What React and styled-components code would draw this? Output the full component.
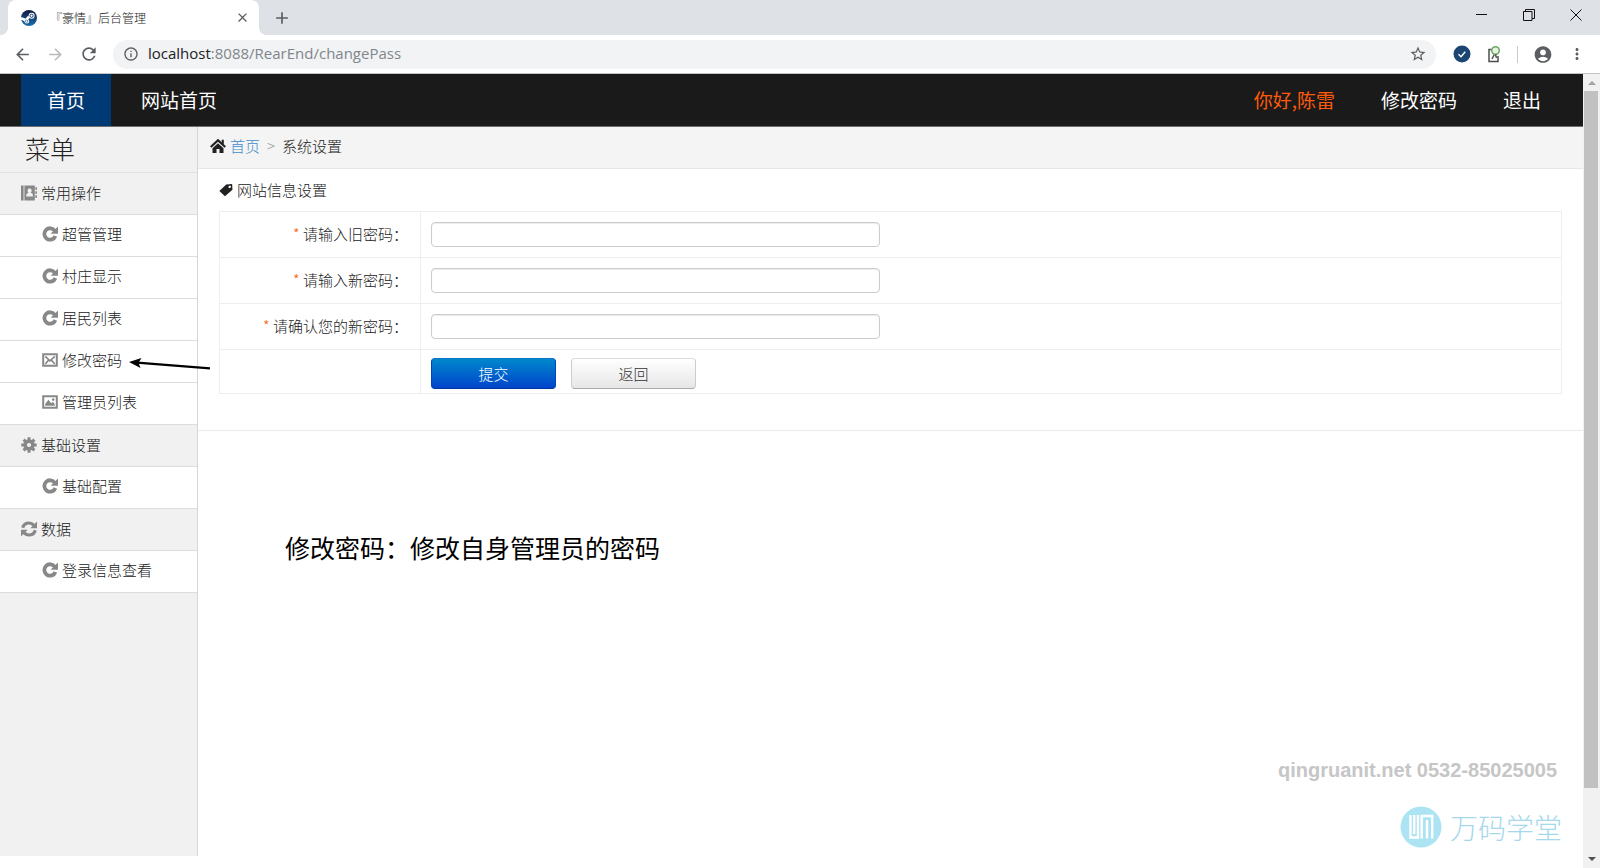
import React from 'react'
import styled, { createGlobalStyle } from "styled-components";
import {
  MdArrowBack,
  MdArrowForward,
  MdRefresh,
  MdInfoOutline,
  MdStarBorder,
  MdAccountCircle,
  MdMoreVert,
  MdAdd,
  MdClose,
} from 'react-icons/md';

const menu = [
  {
    title: '常用操作',
    icon: 'book',
    items: [
      { text: '超管管理', icon: 'repeat' },
      { text: '村庄显示', icon: 'repeat' },
      { text: '居民列表', icon: 'repeat' },
      { text: '修改密码', icon: 'mail', marked: true },
      { text: '管理员列表', icon: 'image' },
    ],
  },
  { title: '基础设置', icon: 'cog', items: [{ text: '基础配置', icon: 'repeat' }] },
  { title: '数据', icon: 'sync', items: [{ text: '登录信息查看', icon: 'repeat' }] },
];

const fields = [
  { id: 'oldPass', label: '请输入旧密码：' },
  { id: 'newPass', label: '请输入新密码：' },
  { id: 'confirmPass', label: '请确认您的新密码：' },
];

const icons = {
  repeat: (
    <>
      <path d="M12.8 4.800A5.700 5.700 0 1 0 13.400 10" fill="none" stroke="currentColor" strokeWidth="3.800" />
      <path d="M16 .4v7.400H8.600z" />
    </>
  ),
  mail: (
    <>
      <path d="M1.200 2.200h13.600v11.600H1.200z" fill="none" stroke="currentColor" strokeWidth="2" />
      <path d="M3.200 4.400 8 8.800l4.800-4.400M3.200 12l3.200-3.600M12.800 12l-3.200-3.600" fill="none" stroke="currentColor" strokeWidth="1.600" />
    </>
  ),
  image: (
    <>
      <path d="M1.200 2.200h13.600v11.600H1.200z" fill="none" stroke="currentColor" strokeWidth="2" />
      <path d="M3.200 11.800V10l3.200-4.200 2.800 3.400 1.600-1.400 2 2.400v1.600z" />
      <circle cx="11.200" cy="5.600" r="1.300" />
    </>
  ),
  book: (
    <>
      <path fillRule="evenodd" d="M0 .5h2.600v15H0zM3.400.5h10.400v15H3.400zM8.600 3.600a2 2 0 0 0-1.300 3.600v.9c-1.300.3-2 1.100-2 2.100v1.300h6.600v-1.300c0-1-.7-1.800-2-2.100v-.9a2 2 0 0 0-1.300-3.600z" />
      <path d="M14.300 2.200h1.700v2.600h-1.700zM14.300 6.200h1.700v2.600h-1.700zM14.300 10.200h1.700v2.600h-1.700z" />
    </>
  ),
  cog: (
    <>
      <circle cx="8" cy="8" r="3.900" fill="none" stroke="currentColor" strokeWidth="3.600" />
      <path d="M8 .3v3M8 12.700v3M.3 8h3M12.700 8h3M2.600 2.600l2 2M11.400 11.400l2 2M2.600 13.400l2-2M11.400 4.600l2-2" fill="none" stroke="currentColor" strokeWidth="3" />
    </>
  ),
  sync: (
    <>
      <path d="M1.700 6.800C2.600 3.600 5 2 8 2c2 0 3.600.8 4.800 2.100M14.300 9.200C13.400 12.400 11 14 8 14c-2 0-3.600-.8-4.800-2.100" fill="none" stroke="currentColor" strokeWidth="3.200" />
      <path d="M16 .5v6.700H9.300zM0 15.500V8.800h6.700z" />
    </>
  ),
  home: (
    <>
      <path d="M8 .8 0 8.300l1.500 1.500L8 3.800l6.500 6L16 8.300l-2.200-2.100V1.800h-2.100v2.400z" />
      <path d="M8 5.200 2.500 10.300V15h4v-4h3v4h4v-4.700z" />
    </>
  ),
  tag: (
    <path fillRule="evenodd" d="M8.200 1.800 15 1l.4 6.600L6.800 15.200.4 9zM12.200 3a1.400 1.400 0 1 0 .1 2.800 1.400 1.400 0 0 0-.1-2.800z" />
  ),
};

const Icon = ({ name, size = 16 }) => (
  <Svg viewBox="0 0 16 16" width={size} height={size} aria-hidden="true">
    {icons[name]}
  </Svg>
);

const Favicon = () => (
  <Svg viewBox="0 0 16 16" width="16" height="16" aria-hidden="true">
    <defs>
      <linearGradient id="steam" x1="0" y1="0" x2="0" y2="1">
        <stop offset="0" stopColor="#10183f" />
        <stop offset="1" stopColor="#1b6fae" />
      </linearGradient>
    </defs>
    <circle cx="8" cy="8" r="8" fill="url(#steam)" />
    <path d="M0 8.300l4.800 2 3.200-3.600" fill="none" stroke="#fff" strokeWidth="2.600" />
    <circle cx="5.800" cy="11.200" r="2.300" fill="#fff" />
    <circle cx="10.600" cy="5.800" r="3" fill="#fff" />
    <circle cx="10.600" cy="5.800" r="1.600" fill="none" stroke="#22406f" />
    <circle cx="5.600" cy="11.200" r="1.200" fill="none" stroke="#22639c" strokeWidth=".7" />
  </Svg>
);

const BrowserBar = () => (
  <header>
    <DivTabs>
      <DivTab>
        <Favicon />
        <SpanTabTitle>『豪情』后台管理</SpanTabTitle>
        <ButtonIcon aria-label="关闭标签页"><MdClose size={15} /></ButtonIcon>
      </DivTab>
      <ButtonIcon $w={46} aria-label="新标签页"><MdAdd size={20} /></ButtonIcon>
      <DivWindow>
        <ButtonIcon $w={47} $dark aria-label="最小化">
          <svg width="12" height="12"><path d="M0 5.500h11" stroke="currentColor" /></svg>
        </ButtonIcon>
        <ButtonIcon $w={47} $dark aria-label="还原">
          <svg width="12" height="12" fill="none" stroke="currentColor">
            <path d="M.5 2.500h8.500v9H.5zM2.500 2.500v-2h9v9H9" />
          </svg>
        </ButtonIcon>
        <ButtonIcon $w={47} $dark aria-label="关闭">
          <svg width="12" height="12"><path d="M.5.5l11 11M11.500.5l-11 11" stroke="currentColor" /></svg>
        </ButtonIcon>
      </DivWindow>
    </DivTabs>
    <DivTools>
      <ButtonIcon $w={33} aria-label="后退"><MdArrowBack size={19} /></ButtonIcon>
      <ButtonIcon $w={33} $off aria-label="前进"><MdArrowForward size={19} /></ButtonIcon>
      <ButtonIcon $w={33} aria-label="刷新"><MdRefresh size={20} /></ButtonIcon>
      <DivAddress>
        <MdInfoOutline size={16} />
        <PUrl><b>localhost</b>:8088/RearEnd/changePass</PUrl>
        <ButtonIcon aria-label="收藏"><MdStarBorder size={18} /></ButtonIcon>
      </DivAddress>
      <DivExtensions>
        <svg width="18" height="18" viewBox="0 0 18 18">
          <circle cx="9" cy="9" r="8.500" fill="#1b4672" />
          <path d="M5.500 9.300l2.500 2.400 4.300-5" fill="none" stroke="#fff" strokeWidth="1.400" />
        </svg>
        <svg width="16" height="18" viewBox="0 0 16 18" fill="none" strokeWidth="1.500">
          <path d="M5.500 4.500H3v12h9V11M6 14l2.500-5" stroke="#4d4d4d" />
          <circle cx="9.500" cy="5.500" r="3.800" stroke="#6ba562" fill="#e6f3e3" />
          <path d="M9.500 9.500l1 3.500" stroke="#4d4d4d" />
        </svg>
        <DivSeparator />
        <ButtonIcon $w={20} aria-label="用户"><MdAccountCircle size={21} /></ButtonIcon>
        <ButtonIcon $w={18} aria-label="更多"><MdMoreVert size={20} /></ButtonIcon>
      </DivExtensions>
    </DivTools>
  </header>
);

const SideMenu = () => (
  <NavSide>
    <H2Menu>菜单</H2Menu>
    {menu.map(group => (
      <React.Fragment key={group.title}>
        <H3Group><Icon name={group.icon} /><span>{group.title}</span></H3Group>
        <UlItems>
          {group.items.map(item => (
            <LiItem key={item.text}>
              <ALink href="#"><Icon name={item.icon} /><span>{item.text}</span></ALink>
              {item.marked && (
                <SvgArrow viewBox="0 0 84 16" width="84" height="16" aria-hidden="true">
                  <path d="M8 6.600 81 12.300" stroke="#000" strokeWidth="2.200" />
                  <path d="M0 6 12.500 2 9.500 6.700 11.500 12z" />
                </SvgArrow>
              )}
            </LiItem>
          ))}
        </UlItems>
      </React.Fragment>
    ))}
  </NavSide>
);

const PassForm = () => (
  <form onSubmit={(e) => e.preventDefault()}>
    <TableForm>
      <tbody>
        {fields.map(f => (
          <tr key={f.id}>
            <Th scope="row">
              <label htmlFor={f.id}><Star>*</Star> {f.label}</label>
            </Th>
            <Td><InputPass type="password" id={f.id} /></Td>
          </tr>
        ))}
        <tr>
          <Th as="td" />
          <Td $short>
            <DivButtons>
              <ButtonForm $primary type="submit">提交</ButtonForm>
              <ButtonForm type="button">返回</ButtonForm>
            </DivButtons>
          </Td>
        </tr>
      </tbody>
    </TableForm>
  </form>
);

const Scrollbar = () => (
  <DivScroll>
    <DivScrollEnd><svg width="8" height="5"><path d="M0 5 4 1l4 4z" fill="#a3a3a3" /></svg></DivScrollEnd>
    <DivTrack><DivThumb /></DivTrack>
    <DivScrollEnd><svg width="8" height="5"><path d="M0 0l4 4 4-4z" fill="#505050" /></svg></DivScrollEnd>
  </DivScroll>
);

const App = () => {
  return (
    <DivScreen>
      <GlobalStyle />
      <BrowserBar />
      <DivViewport>
        <DivPage>
          <NavTop>
            <ANav href="#" $active>首页</ANav>
            <ANav href="#">网站首页</ANav>
            <DivUser>
              <SpanHello>你好,陈雷</SpanHello>
              <AUser href="#">修改密码</AUser>
              <AUser href="#">退出</AUser>
            </DivUser>
          </NavTop>
          <DivBody>
            <SideMenu />
            <Main>
              <DivCrumbs>
                <Icon name="home" />
                <ACrumb href="#">首页</ACrumb>
                <SpanSep>&gt;</SpanSep>
                <span>系统设置</span>
              </DivCrumbs>
              <Section>
                <H1Title><Icon name="tag" size={14} />网站信息设置</H1Title>
                <PassForm />
              </Section>
              <PNote>修改密码：修改自身管理员的密码</PNote>
              <Footer>
                <PContact>qingruanit.net 0532-85025005</PContact>
                <DivBrand>
                  <svg width="42" height="42" viewBox="0 0 42 42">
                    <circle cx="21" cy="21" r="20.500" fill="#ace4f3" />
                    <path d="M10.500 9v22.500h7.500V9M14.200 9v19M21.700 32.500V10h10.500v22.500M27 14v18.500M21.700 32.500" fill="none" stroke="#fff" strokeWidth="2.400" />
                  </svg>
                  <span>万码学堂</span>
                </DivBrand>
              </Footer>
            </Main>
          </DivBody>
        </DivPage>
        <Scrollbar />
      </DivViewport>
    </DivScreen>
  );
};

export default App;

const GlobalStyle = createGlobalStyle`
  * {
    box-sizing: border-box;
  }
  body {
    margin: 0;
    background: #fff;
    color: #222;
    font-family: "Noto Sans CJK SC", sans-serif;
    font-size: 15px;
    font-weight: 300;
    line-height: 20px;
  }
  a {
    color: inherit;
    text-decoration: none;
  }
  h1, h2, h3, p, ul {
    margin: 0;
    padding: 0;
    font-weight: 300;
  }
  svg {
    display: block;
  }
`;

const Svg = styled.svg`
  flex: none;
  fill: currentColor;
`;

const DivScreen = styled.div`
  min-height: 100vh;
  display: flex;
  flex-direction: column;
`;

/* browser */
const ButtonIcon = styled.button`
  width: ${p => p.$w || 20}px;
  height: 30px;
  flex: none;
  padding: 0;
  border: none;
  background: none;
  display: flex;
  align-items: center;
  justify-content: center;
  color: ${p => (p.$dark ? '#111' : p.$off ? '#bababa' : '#5a5d61')};
`;

const DivTabs = styled.div`
  height: 35px;
  padding-left: 8px;
  background: #dee1e6;
  display: flex;
  align-items: center;
`;

const DivTab = styled.div`
  position: relative;
  width: 251px;
  height: 35px;
  padding: 0 7px 0 13px;
  display: flex;
  align-items: center;
  gap: 13px;
  background: #fff;
  border-radius: 8px 8px 0 0;

  &::before,
  &::after {
    content: '';
    position: absolute;
    bottom: 0;
    width: 8px;
    height: 8px;
  }
  &::before {
    left: -8px;
    background: radial-gradient(circle at 0 0, transparent 8px, #fff 8px);
  }
  &::after {
    right: -8px;
    background: radial-gradient(circle at 100% 0, transparent 8px, #fff 8px);
  }
`;

const SpanTabTitle = styled.span`
  flex: 1;
  font-size: 12px;
`;

const DivWindow = styled.div`
  margin-left: auto;
  padding-right: 1px;
  height: 35px;
  display: flex;
`;

const DivTools = styled.div`
  height: 39px;
  padding: 0 14px 0 6px;
  display: flex;
  align-items: center;
  background: #fff;
  border-bottom: 1px solid #c4c4c4;
`;

const DivAddress = styled.div`
  flex: 1;
  height: 29px;
  margin-left: 8px;
  padding: 0 8px 0 10px;
  display: flex;
  align-items: center;
  gap: 9px;
  border-radius: 15px;
  background: #f1f3f4;
  color: #5a5d61;
`;

const PUrl = styled.p`
  flex: 1;
  padding-bottom: 2px;
  font: 400 15px/20px "Open Sans", sans-serif;
  color: #80868b;

  b {
    font-weight: 400;
    color: #202124;
  }
`;

const DivExtensions = styled.div`
  margin-left: 17px;
  display: flex;
  align-items: center;
  gap: 15px;
`;

const DivSeparator = styled.div`
  width: 1px;
  height: 17px;
  background: #c8cacd;
`;

/* page */
const DivViewport = styled.div`
  flex: 1;
  display: flex;
`;

const DivPage = styled.div`
  flex: 1;
  display: flex;
  flex-direction: column;
  padding-bottom: 12px;
`;

const NavTop = styled.nav`
  height: 53px;
  padding: 0 42px 0 21px;
  display: flex;
  gap: 4px;
  background: #1a1a1a;
  border-bottom: 1px solid #6e6e6e;
  color: #fff;
  font-size: 19px;
  font-weight: 400;
`;

const ANav = styled.a`
  padding: 0 26px;
  display: flex;
  align-items: center;
  background: ${p => (p.$active ? '#003a75' : 'none')};
`;

const DivUser = styled.div`
  margin-left: auto;
  display: flex;
  align-items: center;
  gap: 46px;
`;

const SpanHello = styled.span`
  color: #ff5a0a;
`;

const AUser = styled.a`
  color: #fff;
`;

const DivBody = styled.div`
  flex: 1;
  display: flex;
`;

const NavSide = styled.nav`
  width: 198px;
  flex: none;
  background: #f1f1f1;
  border-right: 1px solid #d6d6d6;
`;

const H2Menu = styled.h2`
  height: 46px;
  padding-left: 25px;
  border-bottom: 1px solid #e2e2e2;
  font-size: 25px;
  line-height: 42px;
`;

const H3Group = styled.h3`
  height: 42px;
  padding: 0 0 2px 21px;
  display: flex;
  align-items: center;
  gap: 4px;
  border-bottom: 1px solid #dcdcdc;
  font-size: 15px;

  svg {
    color: #888;
  }
`;

const UlItems = styled.ul`
  list-style: none;
`;

const LiItem = styled.li`
  position: relative;
  background: #fff;
  border-bottom: 1px solid #dcdcdc;
`;

const ALink = styled.a`
  height: 41px;
  padding: 0 0 3px 42px;
  display: flex;
  align-items: center;
  gap: 4px;

  svg {
    color: #888;
  }
`;

/* pointer over the sidebar edge */
const SvgArrow = styled.svg`
  position: absolute;
  left: 129px;
  top: 15px;
  z-index: 1;
`;

const Main = styled.main`
  flex: 1;
  display: flex;
  flex-direction: column;
`;

const DivCrumbs = styled.div`
  height: 42px;
  padding: 0 0 3px 12px;
  display: flex;
  align-items: center;
  gap: 4px;
  background: #f4f4f4;
  border-bottom: 1px solid #e6e6e6;
`;

const ACrumb = styled.a`
  color: #428bca;
`;

const SpanSep = styled.span`
  padding: 0 3px;
  color: #999;
`;

const Section = styled.section`
  padding: 11px 21px 36px;
  border-bottom: 1px solid #eaeaea;
`;

const H1Title = styled.h1`
  display: flex;
  align-items: center;
  gap: 4px;
  margin-bottom: 11px;
  font-size: 15px;
  line-height: 20px;
`;

const TableForm = styled.table`
  width: 100%;
  border-collapse: collapse;
  table-layout: fixed;
`;

const Th = styled.th`
  width: 201px;
  padding: 0 12px 2px 0;
  border: 1px solid #eee;
  font-weight: 300;
  text-align: right;
`;

const Td = styled.td`
  height: ${p => (p.$short ? 44 : 46)}px;
  padding: ${p => (p.$short ? '4px 10px 0' : '0 10px')};
  border: 1px solid #eee;
`;

const Star = styled.span`
  color: #ff5a0a;
`;

const InputPass = styled.input`
  display: block;
  width: 449px;
  max-width: 100%;
  height: 25px;
  padding: 0 6px;
  border: 1px solid #ccc;
  border-radius: 4px;
  background: #fff;
  box-shadow: inset 0 1px 1px rgba(0,0,0,.08);
`;

const DivButtons = styled.div`
  display: flex;
  gap: 15px;
`;

const ButtonForm = styled.button`
  width: 125px;
  height: 31px;
  padding: 0;
  border: 1px solid;
  border-color: ${p => (p.$primary ? '#0a74c4 #0044b8 #003a9c' : '#ddd #ccc #aaa')};
  border-radius: 4px;
  background: ${p => (p.$primary ? 'linear-gradient(#0088cc, #0044cc)' : 'linear-gradient(#fff, #e6e6e6)')};
  color: ${p => (p.$primary ? '#fff' : '#333')};
  font: inherit;
`;

const PNote = styled.p`
  padding: 98px 20px 40px 87px;
  color: #000;
  font-size: 25px;
  font-weight: 400;
  line-height: 36px;
`;

const Footer = styled.footer`
  margin-top: auto;
  padding: 0 21px 8px 0;
  display: flex;
  flex-direction: column;
  align-items: flex-end;
  gap: 24px;
`;

const PContact = styled.p`
  padding-right: 5px;
  color: #c6c6c6;
  font: 700 20px/24px "Liberation Sans", sans-serif;
`;

const DivBrand = styled.div`
  display: flex;
  align-items: center;
  gap: 8px;
  color: #a5d8ec;
  font-size: 28px;
  line-height: 42px;
`;

/* scrollbar */
const DivScroll = styled.div`
  width: 17px;
  display: flex;
  flex-direction: column;
  background: #f1f1f1;
`;

const DivScrollEnd = styled.div`
  height: 17px;
  display: flex;
  align-items: center;
  justify-content: center;
`;

const DivTrack = styled.div`
  flex: 1;
  padding: 0 2px 0 1px;
  display: flex;
  flex-direction: column;

  &::after {
    content: '';
    flex: 1;
  }
`;

const DivThumb = styled.div`
  flex: 11;
  background: #c1c1c1;
`;
